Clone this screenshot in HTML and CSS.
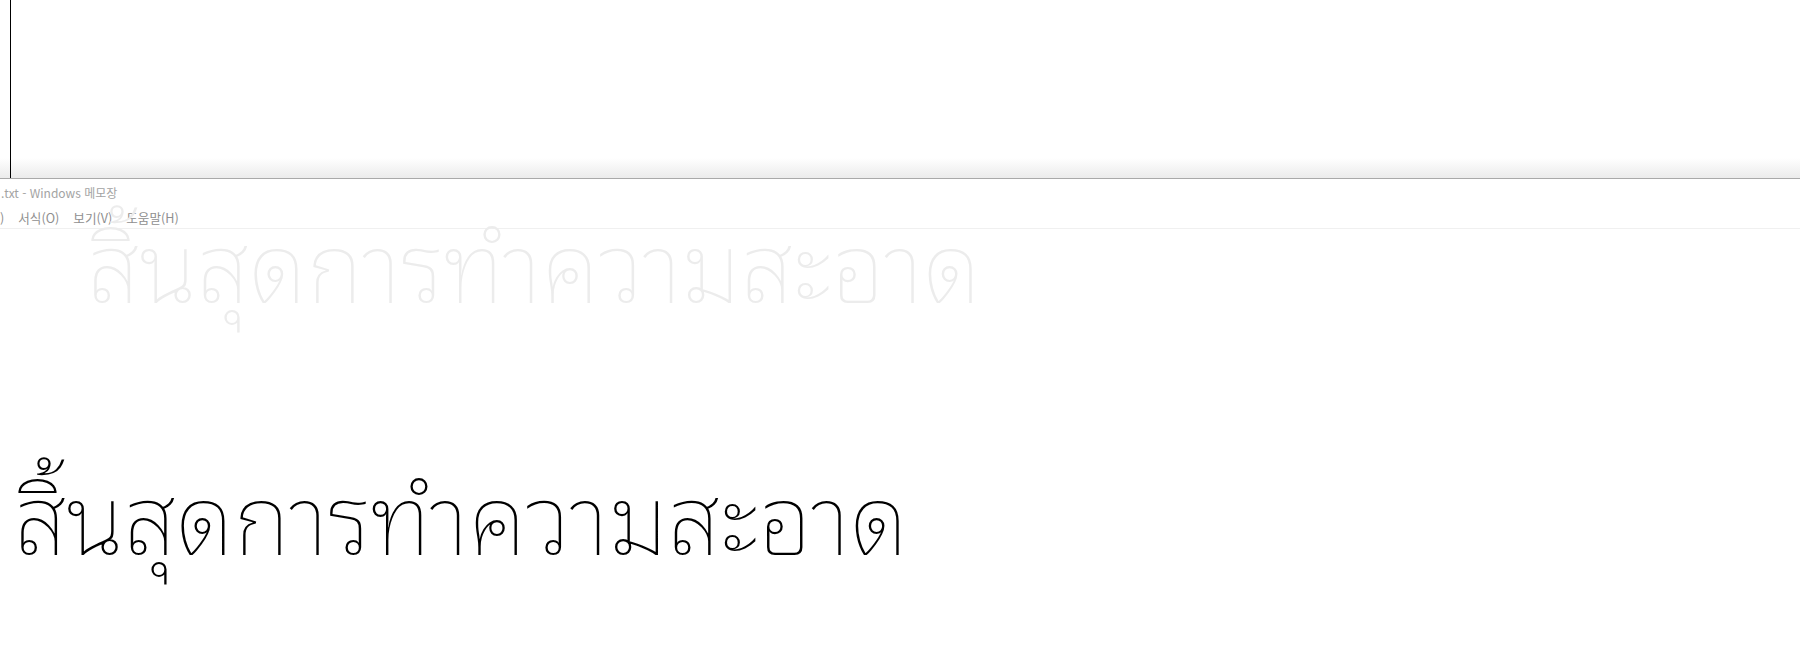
FILE: index.html
```
<!DOCTYPE html>
<html lang="ko">
<head>
<meta charset="utf-8">
<title>메모장</title>
<link rel="stylesheet" href="styles.css">
</head>
<body>
<div class="screen">
  <div class="desk"><div class="vline"></div></div>
  <div class="notepad">
    <div class="titlebar">.txt - Windows 메모장</div>
    <div class="menubar">
      <span class="menu-item">)</span>
      <span class="menu-item">서식(O)</span>
      <span class="menu-item">보기(V)</span>
      <span class="menu-item">도움말(H)</span>
    </div>
    <div class="ghost" lang="th">สิ้นสุดการทำความสะอาด</div>
    <div class="content" lang="th">สิ้นสุดการทำความสะอาด</div>
  </div>
</div>
</body>
</html>
```
FILE: styles.css
```
html, body {
  margin: 0;
  padding: 0;
  background: #fff;
}
.screen {
  width: 1800px;
  height: 660px;
  overflow: hidden;
  position: relative;
}
.desk {
  height: 178px;
  background: linear-gradient(to bottom, #fff 0, #fff 158px, #ececec 177px);
  border-bottom: 1px solid #a9a9a9;
}
.vline {
  margin-left: 10px;
  width: 1px;
  height: 178px;
  background: #000;
}
.notepad {
  position: relative;
  font-family: "Noto Sans CJK KR", "Noto Sans", sans-serif;
}
.titlebar {
  height: 28px;
  line-height: 28px;
  font-size: 12px;
  color: #a3a3a3;
  padding-left: 1px;
}
.menubar {
  display: flex;
  gap: 14px;
  height: 21px;
  line-height: 21px;
  font-size: 12.6px;
  color: #8f8f8f;
  border-bottom: 1px solid #f0f0f0;
}
.ghost {
  position: absolute;
  left: 87px;
  top: 32px;
  font-family: "Noto Sans Thai Looped", "Noto Sans Thai", sans-serif;
  font-weight: 100;
  font-size: 97px;
  line-height: 1;
  color: #ececec;
  white-space: nowrap;
}
.content {
  padding: 234px 0 0 14px;
  font-family: "Noto Sans Thai Looped", "Noto Sans Thai", sans-serif;
  font-weight: 100;
  font-size: 97px;
  line-height: 1;
  color: #000;
  white-space: nowrap;
}
```
